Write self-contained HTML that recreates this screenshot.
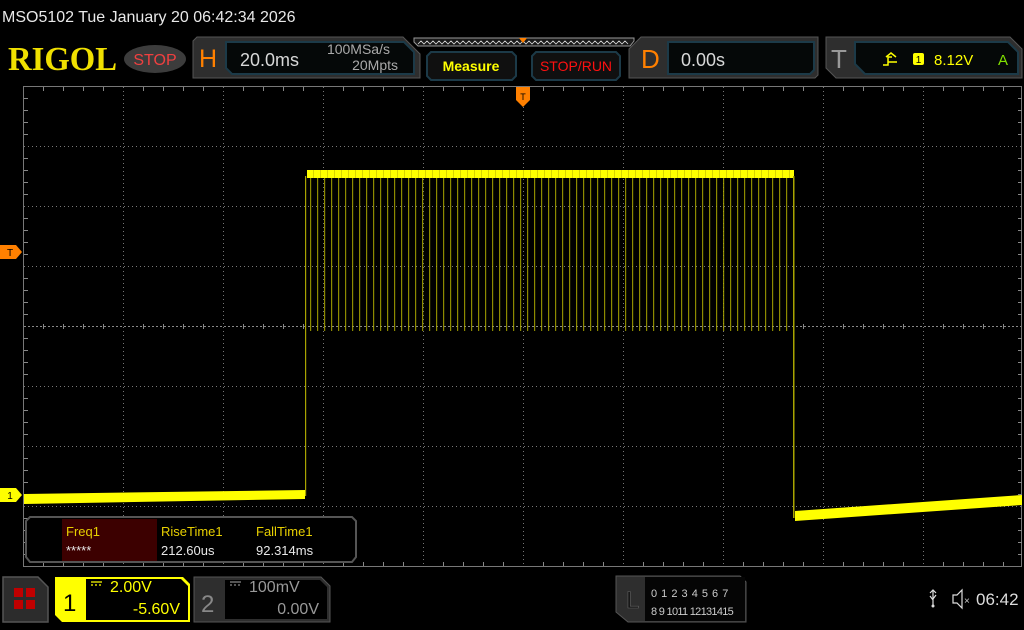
<!DOCTYPE html>
<html><head><meta charset="utf-8"><style>
html,body{margin:0;padding:0;background:#000;width:1024px;height:630px;overflow:hidden}
svg{display:block}
text{font-family:"Liberation Sans","DejaVu Sans",sans-serif}
</style></head><body>
<svg width="1024" height="630" viewBox="0 0 1024 630" xmlns="http://www.w3.org/2000/svg">
<defs>
<pattern id="pl" x="307" y="0" width="7" height="630" patternUnits="userSpaceOnUse">
<rect x="3" y="0" width="1.2" height="630" fill="#b0ac00" opacity="0.8"/>
</pattern>
<pattern id="pt" x="307" y="0" width="7" height="630" patternUnits="userSpaceOnUse">
<rect x="0" y="0" width="6" height="630" fill="#ffff00"/>
<rect x="6" y="0" width="1" height="630" fill="#d8d400"/>
</pattern>
</defs>
<rect width="1024" height="630" fill="#000"/>
<text x="2" y="22" fill="#e8e8e8" font-size="16">MSO5102  Tue January 20 06:42:34 2026</text>
<!-- RIGOL -->
<text x="8" y="70" fill="#f0e000" font-size="34" font-weight="bold" textLength="109" lengthAdjust="spacingAndGlyphs" style="font-family:'Liberation Serif',serif">RIGOL</text>
<ellipse cx="155" cy="59" rx="31" ry="14" fill="#3c3c3c"/>
<text x="155" y="65" fill="#f04040" font-size="16" text-anchor="middle">STOP</text>
<!-- H -->
<path d="M197 37 H403 L420 54 V78 H193 V41 Z" fill="#2e2e2e" stroke="#555" stroke-width="1"/>
<text x="199" y="67" fill="#ff8000" font-size="25">H</text>
<path d="M226 42 H404 L414 52 V74 H232 L226 68 Z" fill="#050808" stroke="#1c3a48" stroke-width="2"/>
<text x="240" y="66" fill="#d8d8d8" font-size="18">20.0ms</text>
<text x="390" y="54" fill="#aaa" font-size="14" text-anchor="end">100MSa/s</text>
<text x="398" y="70" fill="#aaa" font-size="14" text-anchor="end">20Mpts</text>
<!-- timeline strip -->
<path d="M414 38 H634 V41 L630 46 H418 L414 42 Z" fill="#1a1a1a" stroke="#999" stroke-width="1"/>
<polyline points="418,44 421,41 424,44 427,41 430,44 433,41 436,44 439,41 442,44 445,41 448,44 451,41 454,44 457,41 460,44 463,41 466,44 469,41 472,44 475,41 478,44 481,41 484,44 487,41 490,44 493,41 496,44 499,41 502,44 505,41 508,44 511,41 514,44 517,41 520,44 523,41 526,44 529,41 532,44 535,41 538,44 541,41 544,44 547,41 550,44 553,41 556,44 559,41 562,44 565,41 568,44 571,41 574,44 577,41 580,44 583,41 586,44 589,41 592,44 595,41 598,44 601,41 604,44 607,41 610,44 613,41 616,44 619,41 622,44 625,41 628,44" fill="none" stroke="#ddd" stroke-width="0.8"/>
<path d="M519 38 H527 L523 43 Z" fill="#ff8000"/>
<!-- Measure -->
<path d="M431 52 H512 L516 56 V76 L512 80 H431 L427 76 V56 Z" fill="#101010" stroke="#1c3a48" stroke-width="2"/>
<text x="471" y="71" fill="#ffff00" font-size="14" font-weight="bold" text-anchor="middle">Measure</text>
<path d="M536 52 H616 L620 56 V76 L616 80 H536 L532 76 V56 Z" fill="#101010" stroke="#1c3a48" stroke-width="2"/>
<text x="576" y="71" fill="#ff1010" font-size="14" text-anchor="middle">STOP/RUN</text>
<!-- D -->
<path d="M641 37 H818 V75 L815 78 H629 V49 Z" fill="#2e2e2e" stroke="#555"/>
<text x="641" y="68" fill="#ff8000" font-size="26">D</text>
<path d="M668 42 H814 V70 L810 74 H668 Z" fill="#050808" stroke="#1c3a48" stroke-width="2"/>
<text x="681" y="66" fill="#d8d8d8" font-size="18">0.00s</text>
<!-- T -->
<path d="M826 37 H1010 L1022 49 V78 H836 L826 68 Z" fill="#2e2e2e" stroke="#555"/>
<text x="831" y="68" fill="#999" font-size="26">T</text>
<path d="M855 42 H1008 L1018 52 V74 H865 L855 64 Z" fill="#050808" stroke="#1c3a48" stroke-width="2"/>
<path d="M883 65 H888 V57 H892 M886 57 L891 53 L896 57 M888 62 H897" fill="none" stroke="#ffff00" stroke-width="1.5"/>
<rect x="913" y="53" width="11" height="12" rx="2" fill="#ffff00"/>
<text x="918.5" y="63" fill="#000" font-size="10" text-anchor="middle">1</text>
<text x="934" y="65" fill="#ffff00" font-size="15">8.12V</text>
<text x="998" y="65" fill="#80e000" font-size="15">A</text>
<!-- grid -->
<g stroke="#777" stroke-width="1" stroke-dasharray="1,3">
<line x1="123.5" y1="87" x2="123.5" y2="566"/><line x1="223.5" y1="87" x2="223.5" y2="566"/><line x1="323.5" y1="87" x2="323.5" y2="566"/><line x1="423.5" y1="87" x2="423.5" y2="566"/><line x1="523.5" y1="87" x2="523.5" y2="566"/><line x1="623.5" y1="87" x2="623.5" y2="566"/><line x1="723.5" y1="87" x2="723.5" y2="566"/><line x1="823.5" y1="87" x2="823.5" y2="566"/><line x1="923.5" y1="87" x2="923.5" y2="566"/>
<line x1="24" y1="146.5" x2="1022" y2="146.5"/><line x1="24" y1="206.5" x2="1022" y2="206.5"/><line x1="24" y1="266.5" x2="1022" y2="266.5"/><line x1="24" y1="386.5" x2="1022" y2="386.5"/><line x1="24" y1="446.5" x2="1022" y2="446.5"/><line x1="24" y1="506.5" x2="1022" y2="506.5"/>
</g>
<g stroke="#888" stroke-width="1" stroke-dasharray="2,2"><line x1="24" y1="326.5" x2="1022" y2="326.5"/></g>
<rect x="23.5" y="86.5" width="998" height="480" fill="none" stroke="#777"/>
<path d="M43.5 87 v4 M63.5 87 v4 M83.5 87 v4 M103.5 87 v4 M143.5 87 v4 M163.5 87 v4 M183.5 87 v4 M203.5 87 v4 M243.5 87 v4 M263.5 87 v4 M283.5 87 v4 M303.5 87 v4 M343.5 87 v4 M363.5 87 v4 M383.5 87 v4 M403.5 87 v4 M443.5 87 v4 M463.5 87 v4 M483.5 87 v4 M503.5 87 v4 M543.5 87 v4 M563.5 87 v4 M583.5 87 v4 M603.5 87 v4 M643.5 87 v4 M663.5 87 v4 M683.5 87 v4 M703.5 87 v4 M743.5 87 v4 M763.5 87 v4 M783.5 87 v4 M803.5 87 v4 M843.5 87 v4 M863.5 87 v4 M883.5 87 v4 M903.5 87 v4 M943.5 87 v4 M963.5 87 v4 M983.5 87 v4 M1003.5 87 v4
M43.5 566 v-4 M63.5 566 v-4 M83.5 566 v-4 M103.5 566 v-4 M143.5 566 v-4 M163.5 566 v-4 M183.5 566 v-4 M203.5 566 v-4 M243.5 566 v-4 M263.5 566 v-4 M283.5 566 v-4 M303.5 566 v-4 M343.5 566 v-4 M363.5 566 v-4 M383.5 566 v-4 M403.5 566 v-4 M443.5 566 v-4 M463.5 566 v-4 M483.5 566 v-4 M503.5 566 v-4 M543.5 566 v-4 M563.5 566 v-4 M583.5 566 v-4 M603.5 566 v-4 M643.5 566 v-4 M663.5 566 v-4 M683.5 566 v-4 M703.5 566 v-4 M743.5 566 v-4 M763.5 566 v-4 M783.5 566 v-4 M803.5 566 v-4 M843.5 566 v-4 M863.5 566 v-4 M883.5 566 v-4 M903.5 566 v-4 M943.5 566 v-4 M963.5 566 v-4 M983.5 566 v-4 M1003.5 566 v-4
M24 98.5 h4 M24 110.5 h4 M24 122.5 h4 M24 134.5 h4 M24 158.5 h4 M24 170.5 h4 M24 182.5 h4 M24 194.5 h4 M24 218.5 h4 M24 230.5 h4 M24 242.5 h4 M24 254.5 h4 M24 278.5 h4 M24 290.5 h4 M24 302.5 h4 M24 314.5 h4 M24 338.5 h4 M24 350.5 h4 M24 362.5 h4 M24 374.5 h4 M24 398.5 h4 M24 410.5 h4 M24 422.5 h4 M24 434.5 h4 M24 458.5 h4 M24 470.5 h4 M24 482.5 h4 M24 494.5 h4 M24 518.5 h4 M24 530.5 h4 M24 542.5 h4 M24 554.5 h4
M1022 98.5 h-4 M1022 110.5 h-4 M1022 122.5 h-4 M1022 134.5 h-4 M1022 158.5 h-4 M1022 170.5 h-4 M1022 182.5 h-4 M1022 194.5 h-4 M1022 218.5 h-4 M1022 230.5 h-4 M1022 242.5 h-4 M1022 254.5 h-4 M1022 278.5 h-4 M1022 290.5 h-4 M1022 302.5 h-4 M1022 314.5 h-4 M1022 338.5 h-4 M1022 350.5 h-4 M1022 362.5 h-4 M1022 374.5 h-4 M1022 398.5 h-4 M1022 410.5 h-4 M1022 422.5 h-4 M1022 434.5 h-4 M1022 458.5 h-4 M1022 470.5 h-4 M1022 482.5 h-4 M1022 494.5 h-4 M1022 518.5 h-4 M1022 530.5 h-4 M1022 542.5 h-4 M1022 554.5 h-4
M43.5 324 v5 M63.5 324 v5 M83.5 324 v5 M103.5 324 v5 M143.5 324 v5 M163.5 324 v5 M183.5 324 v5 M203.5 324 v5 M243.5 324 v5 M263.5 324 v5 M283.5 324 v5 M303.5 324 v5 M803.5 324 v5 M843.5 324 v5 M863.5 324 v5 M883.5 324 v5 M903.5 324 v5 M943.5 324 v5 M963.5 324 v5 M983.5 324 v5 M1003.5 324 v5" stroke="#888" fill="none"/>
<!-- waveform -->
<rect x="307" y="176" width="486" height="155" fill="url(#pl)"/>
<rect x="307" y="170" width="487" height="8" fill="url(#pt)"/>
<rect x="305" y="176" width="1.2" height="320" fill="#a8a400"/>
<rect x="793" y="176" width="1.5" height="342" fill="#a8a400"/>
<polygon points="24,494 305,490 305,499 24,504" fill="#ffff00"/>
<polygon points="795,511 1022,495 1022,505 795,521" fill="#ffff00"/>
<!-- markers -->
<path d="M516 87 H530 V100 L523 107 L516 100 Z" fill="#ff8000"/>
<text x="523" y="100" fill="#000" font-size="9" text-anchor="middle">T</text>
<path d="M0 245 H16 L22 252 L16 259 H0 Z" fill="#ff8000"/>
<text x="10" y="256" fill="#000" font-size="10" text-anchor="middle">T</text>
<path d="M0 488 H16 L22 495 L16 502 H0 Z" fill="#ffff00"/>
<text x="10" y="499" fill="#000" font-size="10" text-anchor="middle">1</text>
<!-- measurement panel -->
<path d="M30 517 H352 L356 521 V557 L352 562 H30 L26 557 V521 Z" fill="#000" stroke="#555" stroke-width="2"/>
<rect x="62" y="519" width="95" height="42" fill="#3c0000"/>
<text x="66" y="536" fill="#e8d000" font-size="13">Freq1</text>
<text x="66" y="555" fill="#e8e8e8" font-size="13">*****</text>
<text x="161" y="536" fill="#e8d000" font-size="13">RiseTime1</text>
<text x="161" y="555" fill="#e8e8e8" font-size="13">212.60us</text>
<text x="256" y="536" fill="#e8d000" font-size="13">FallTime1</text>
<text x="256" y="555" fill="#e8e8e8" font-size="13">92.314ms</text>
<!-- bottom -->
<path d="M3 577 H38 L48 587 V622 H3 Z" fill="#2c2c2c" stroke="#555" stroke-width="1.5"/>
<rect x="14" y="588" width="9" height="9" fill="#c00000"/><rect x="26" y="588" width="9" height="9" fill="#c00000"/><rect x="14" y="600" width="9" height="9" fill="#c00000"/><rect x="26" y="600" width="9" height="9" fill="#c00000"/>
<path d="M55 577 H183 L190 584 V622 H62 L55 615 Z" fill="#ffff00"/>
<path d="M86 579 H181 L188 586 V620 H86 Z" fill="#000"/>
<text x="63" y="611" fill="#000" font-size="24">1</text>
<path d="M91 582 H102 M91 585 h2 M95 585 h2 M99 585 h2" stroke="#ffff00" stroke-width="1.3"/>
<text x="110" y="592" fill="#ffff00" font-size="16">2.00V</text>
<text x="180" y="614" fill="#ffff00" font-size="16" text-anchor="end">-5.60V</text>
<path d="M194 577 H321 L330 586 V622 H194 Z" fill="#2e2e2e" stroke="#555"/>
<path d="M225 580 H320 L327 587 V619 H225 Z" fill="#000"/>
<text x="201" y="612" fill="#888" font-size="24">2</text>
<path d="M230 582 H241 M230 585 h2 M234 585 h2 M238 585 h2" stroke="#888" stroke-width="1.3"/>
<text x="249" y="592" fill="#999" font-size="16">100mV</text>
<text x="319" y="614" fill="#999" font-size="16" text-anchor="end">0.00V</text>
<path d="M616 576 H740 L746 582 V622 H628 L616 612 Z" fill="#2e2e2e" stroke="#555"/>
<rect x="645" y="577" width="100" height="44" fill="#050505"/>
<text x="626" y="608" fill="#111" stroke="#666" stroke-width="0.6" font-size="24">L</text>
<text x="651" y="597" fill="#ccc" font-size="11" letter-spacing="0.5">0 1 2 3  4 5 6 7</text>
<text x="651" y="615" fill="#ccc" font-size="11" letter-spacing="-0.7">8 9 1011 12131415</text>
<path d="M933 590 V605 M930 593 L933 590 L936 593 M930 596 L933 600 M936 595 L933 599" stroke="#ddd" stroke-width="1.2" fill="none"/>
<circle cx="933" cy="606" r="1.5" fill="#ddd"/>
<path d="M953 595 H957 L962 590 V608 L957 603 H953 Z" fill="none" stroke="#ddd" stroke-width="1.2"/>
<text x="964" y="604" fill="#ccc" font-size="10">×</text>
<text x="976" y="605" fill="#ddd" font-size="17">06:42</text>
</svg>
</body></html>
